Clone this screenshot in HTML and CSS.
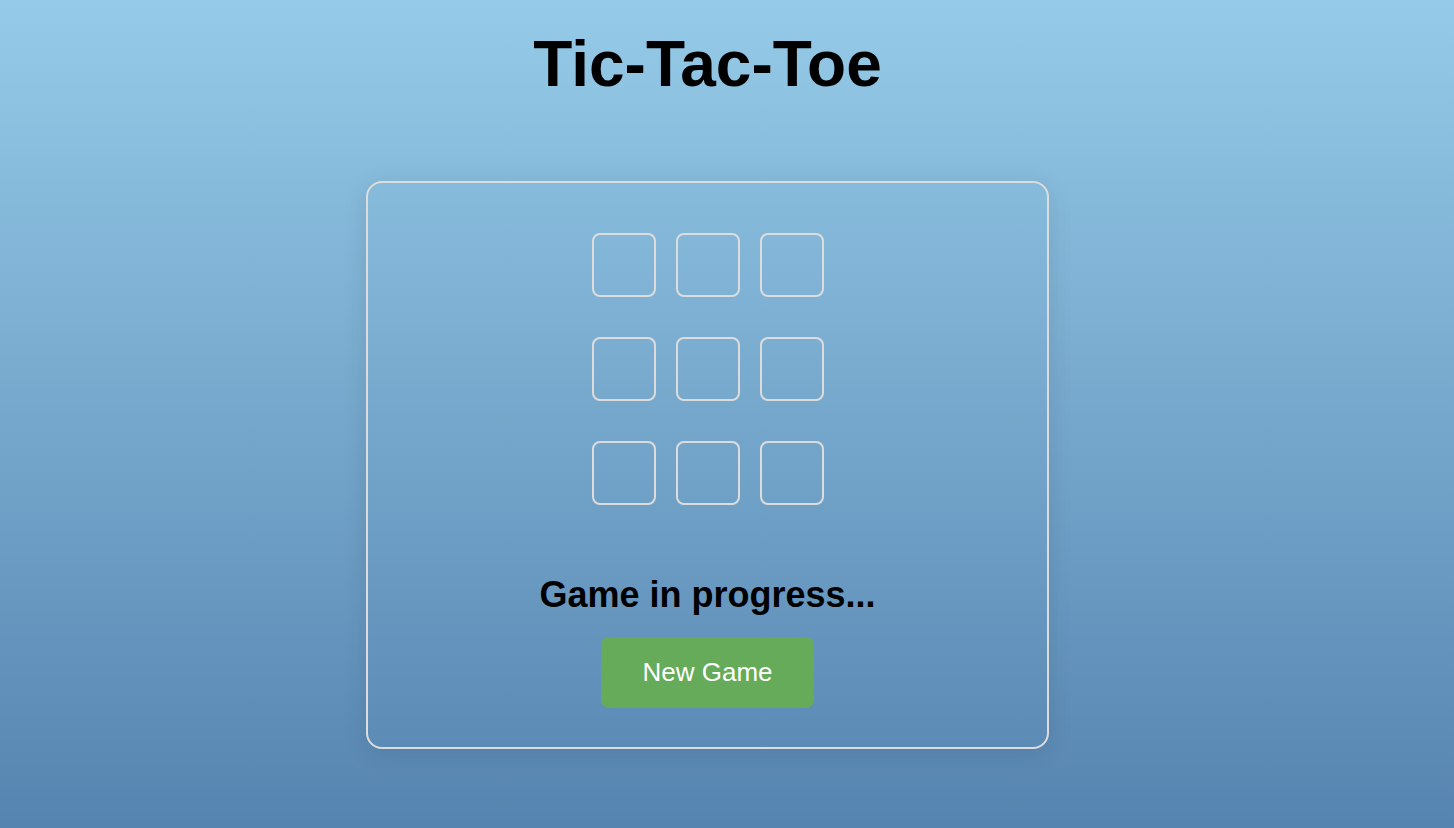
FILE: index.html
```html
<!DOCTYPE html>
<html lang="en">
<head>
<meta charset="utf-8">
<title>Tic-Tac-Toe</title>
<link rel="stylesheet" href="styles.css">
</head>
<body>
<main class="page">
  <h1 class="title">Tic-Tac-Toe</h1>
  <section class="card">
    <div class="board">
      <button class="cell"></button>
      <button class="cell"></button>
      <button class="cell"></button>
      <button class="cell"></button>
      <button class="cell"></button>
      <button class="cell"></button>
      <button class="cell"></button>
      <button class="cell"></button>
      <button class="cell"></button>
    </div>
    <h2 class="status">Game in progress...</h2>
    <button class="new-game">New Game</button>
  </section>
</main>
</body>
</html>
```

FILE: styles.css
```css
html, body {
  margin: 0;
  padding: 0;
  height: 100%;
}
body {
  background: linear-gradient(to bottom, #95cbe8 0%, #5684b0 100%);
  font-family: "Liberation Sans", Arial, Helvetica, sans-serif;
  color: #000;
  overflow: hidden;
}
.page {
  box-sizing: border-box;
  height: 100%;
  padding-right: 39px;
  display: flex;
  flex-direction: column;
  align-items: center;
}
.title {
  margin: 27px 0 0;
  font-size: 64px;
  font-weight: bold;
  line-height: 74px;
}
.card {
  box-sizing: border-box;
  width: 683px;
  margin-top: 80px;
  padding: 50px 0 39px;
  border: 2px solid #dcdcdc;
  border-radius: 16px;
  box-shadow: 0 4px 24px rgba(0, 0, 0, 0.1);
  display: flex;
  flex-direction: column;
  align-items: center;
}
.board {
  display: grid;
  grid-template-columns: repeat(3, 64px);
  grid-auto-rows: 64px;
  gap: 40px 20px;
}
.cell {
  box-sizing: border-box;
  width: 64px;
  height: 64px;
  padding: 0;
  background: transparent;
  border: 2px solid #dcdcdc;
  border-radius: 8px;
}
.status {
  margin: 69px 0 0;
  font-size: 36px;
  font-weight: bold;
  line-height: 41px;
}
.new-game {
  margin-top: 22px;
  padding: 20px 41px;
  font-family: "Liberation Sans", Arial, Helvetica, sans-serif;
  font-size: 26px;
  line-height: 31px;
  color: #fff;
  background: #66ab5a;
  border: none;
  border-radius: 8px;
}
```
